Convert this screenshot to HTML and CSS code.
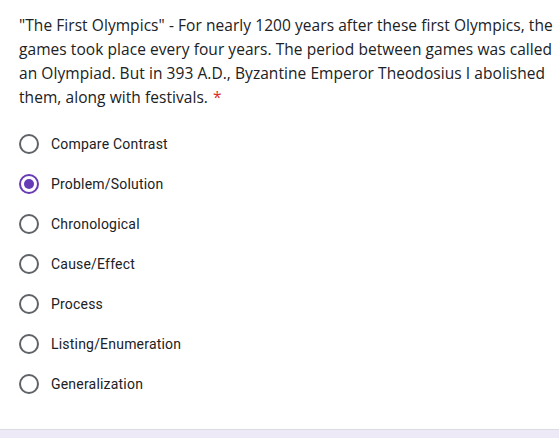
FILE: index.html
```html
<!DOCTYPE html>
<html>
<head>
	<link rel="stylesheet" href="styles.css">
</head>
<body>
	<div class="card">
		<div class="question">"The First Olympics" - For nearly 1200 years after these first Olympics, the games took place every four years. The period between games was called an Olympiad. But in 393 A.D., Byzantine Emperor Theodosius I abolished them, along with festivals.<span class="req">*</span></div>
		<div class="options">
			<label class="option"><span class="radio"></span>Compare Contrast</label>
			<label class="option"><span class="radio checked"></span>Problem/Solution</label>
			<label class="option"><span class="radio"></span>Chronological</label>
			<label class="option"><span class="radio"></span>Cause/Effect</label>
			<label class="option"><span class="radio"></span>Process</label>
			<label class="option"><span class="radio"></span>Listing/Enumeration</label>
			<label class="option"><span class="radio"></span>Generalization</label>
		</div>
	</div>
</body>
</html>
```

FILE: styles.css
```css
body {
  margin: 0;
  background: #ede9f6;
  height: 438px;
}

.card {
  background: #fff;
  border-bottom: 1px solid #dadce0;
  padding: 13px 0 24px 19px;
  height: 392px;
}

.question {
  font-family: "Open Sans", sans-serif;
  font-size: 15.5px;
  line-height: 24px;
  color: #202124;
  letter-spacing: 0.06px;
}

.req {
  color: #d93025;
  margin-left: 5px;
}

.options {
  margin-top: 15px;
  display: flex;
  flex-direction: column;
}

.option {
  display: flex;
  align-items: center;
  height: 40px;
  font-family: Roboto, sans-serif;
  font-size: 14px;
  color: #202124;
  letter-spacing: 0.2px;
}

.radio {
  box-sizing: border-box;
  width: 20px;
  height: 20px;
  border: 2px solid #5f6368;
  border-radius: 50%;
  margin-right: 12px;
  display: flex;
  align-items: center;
  justify-content: center;
}

.radio.checked {
  border-color: #673ab7;
}

.radio.checked::after {
  content: "";
  width: 10px;
  height: 10px;
  border-radius: 50%;
  background: #673ab7;
}
```
